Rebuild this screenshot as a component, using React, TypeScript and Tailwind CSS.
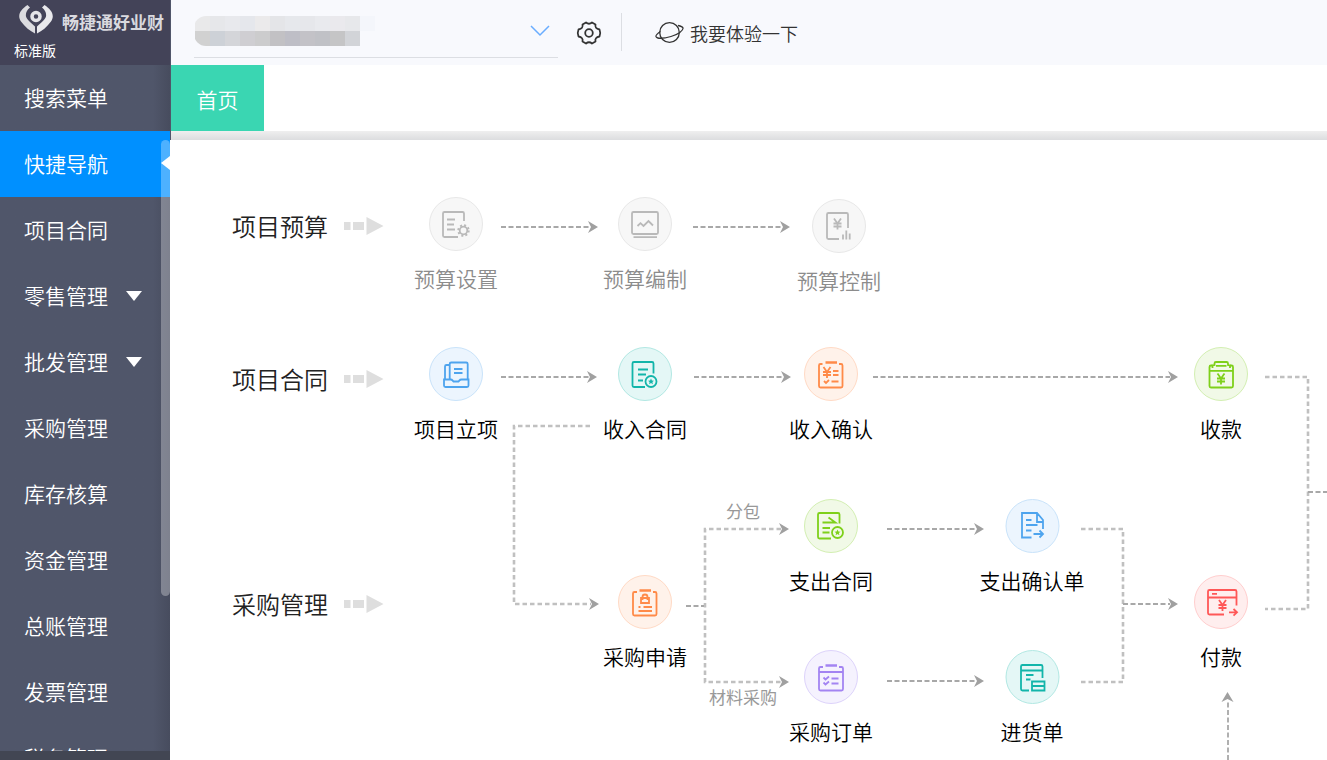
import type { ReactNode } from 'react';

const menu = [
  { label: '搜索菜单' },
  { label: '快捷导航', active: true },
  { label: '项目合同' },
  { label: '零售管理', expandable: true },
  { label: '批发管理', expandable: true },
  { label: '采购管理' },
  { label: '库存核算' },
  { label: '资金管理' },
  { label: '总账管理' },
  { label: '发票管理' },
  { label: '税务管理' },
];

const maskTop = ['#e9e9ea', '#e6e7ea', '#e8e9ed', '#e5e7ec', '#ebeaeb', '#e4e5e8', '#e6e8ec', '#e6e7eb', '#e9eaee', '#eae9ed', '#e7e8eb', '#f4f6fb'];
const maskBottom = ['#d1d1d1', '#cdd1d7', '#d4d5d9', '#cfced2', '#cccccd', '#c2c1c4', '#bebec6', '#c3c2c7', '#c0c1c6', '#c5c5c6', '#d2d4d8'];

const tones = {
  gray: 'bg-[#f7f7f7] border-[#e8e8e8] text-[#b9b9b9]',
  blue: 'bg-[#ecf5fe] border-[#c9e3fa] text-[#4ea4ee]',
  teal: 'bg-[#e4f7f6] border-[#b2e8e3] text-[#12b5aa]',
  orange: 'bg-[#fff2ea] border-[#ffdac5] text-[#ff8a48]',
  green: 'bg-[#f1f9e7] border-[#d3efb2] text-[#7ed01a]',
  red: 'bg-[#ffeeee] border-[#ffcece] text-[#ff5757]',
  purple: 'bg-[#f5f2fe] border-[#ddd3fb] text-[#a384f2]',
};

function Yen({ x, y }: { x: number; y: number }) {
  return (
    <path d={`M${x - 3.5} ${y - 5}l3.5 5l3.500 -5M${x} ${y}v6M${x - 4} ${y}h8M${x - 4} ${y + 3}h8`} />
  );
}

function Star({ x, y }: { x: number; y: number }) {
  return (
    <>
      <circle cx={x} cy={y} r="5.5" />
      <path
        d={`M${x} ${y - 3}l.9 2l2.1 .2l-1.6 1.4l.5 2.1l-1.9 -1.1l-1.9 1.1l.5 -2.1l-1.6 -1.4l2.1 -.2z`}
        fill="currentColor"
        stroke="none"
      />
    </>
  );
}

const icons: Record<string, ReactNode> = {
  budgetSetup: (
    <>
      <path d="M35 24v-7.5q0-1.5-1.5-1.5h-18q-1.5 0-1.5 1.5v22q0 1.5 1.5 1.5H29M18 22.5h8M18 27.5h7M18 32.5h8" />
      <circle cx="34.5" cy="33.5" r="3.8" />
      <circle cx="34.5" cy="33.5" r="5.2" strokeDasharray="2 2.08" strokeWidth="2" />
    </>
  ),
  budgetPlan: (
    <>
      <rect x="14" y="15" width="26" height="22" rx="1.5" />
      <path d="M15.5 40.2h23.5M19.5 29l3-2.8l3 2.8l5-5l4.5 4.500" />
    </>
  ),
  budgetControl: (
    <>
      <path d="M36 29V15.5q0-1.5-1.5-1.5H16.5q-1.5 0-1.5 1.5v23q0 1.5 1.5 1.5H27M31 35.5v5M34.3 31.5v9M37.7 34.5v6" />
      <Yen x={25.5} y={24.5} />
    </>
  ),
  projectStart: (
    <>
      <path d="M15 32.5h6.5q1.5 0 2 1l1 1h5l1-1q.5-1 2-1h7v6q0 1.5-1.5 1.5h-21.5q-1.5 0-1.5-1.5z" />
      <path d="M20.7 32V17q0-1.5 1.5-1.5h15q1.5 0 1.5 1.5v15M16 32V19.5q0-1.5 1.5-1.5h3M25 22h8.5M25 26h8.5" />
    </>
  ),
  incomeContract: (
    <>
      <path d="M35.5 26.5v-10q0-1.5-1.5-1.5H16q-1.5 0-1.5 1.5v22q0 1.5 1.5 1.5h11M20 22.5h10M20 27.5h8M20 33.5h5" />
      <Star x={33} y={34.5} />
    </>
  ),
  incomeConfirm: (
    <>
      <path d="M18.5 17H16.5q-1.5 0-1.5 1.5v20.500q0 1.5 1.5 1.5h20.5q1.5 0 1.5-1.5v-20.500q0-1.5-1.5-1.500h-2" />
      <path d="M21.5 15.5h11.5" strokeWidth="2.5" />
      <path d="M29 24h5.5M29 28h5.5M20 34l2 2l3-3M27.5 34.5h7" />
      <Yen x={23} y={25} />
    </>
  ),
  receipt: (
    <>
      <path d="M18.5 18.5h-1.5q-1.5 0-1.5 1.5v19q0 1.5 1.5 1.5h20.5q1.5 0 1.5-1.5v-19q0-1.5-1.5-1.5h-1.500M15.5 23.8h23.5" />
      <path d="M18.5 21v-2.5l2-.5v-1.5q0-1.5 1.5-1.5h10.5q1.5 0 1.5 1.5v1.5l2 .5v2.5M22 18.8h10.5" />
      <Yen x={27} y={31.5} />
    </>
  ),
  purchaseApply: (
    <>
      <path d="M19 17H16.5q-1.5 0-1.5 1.5v20.5q0 1.5 1.5 1.5h20.5q1.5 0 1.5-1.5v-20.5q0-1.5-1.5-1.5h-2" />
      <path d="M21.5 15.5h11.5" strokeWidth="2.5" />
      <path d="M23 23h8v5h-8zM24.5 25v-3q0-2.5 2.5-2.5t2.5 2.5v3M20.5 32h2M25.5 32h8.5M20.5 36h13.5" />
    </>
  ),
  expenseContract: (
    <>
      <path d="M35.5 24.5v-9q0-1.5-1.5-1.5H15.5q-1.5 0-1.5 1.5v22.5q0 1.5 1.5 1.5h11.5M18.5 23.5h13l-7-5M18.5 29h7.5M18.5 33.5h7" />
      <Star x={33.5} y={33.5} />
    </>
  ),
  expenseConfirm: (
    <path d="M26 38.5h-9.5V14h15l6 7v9M31.5 14v9h6M20.5 21h5.5M20.5 26h11.5M20.5 31.5h5.5M28 35h9.5M34 31.5l3.5 3.5l-3.5 3.5" />
  ),
  payment: (
    <>
      <path d="M30 39.5H15.5q-1.5 0-1.5-1.5V16.5q0-1.5 1.5-1.5h25.5q1.5 0 1.5 1.5v14M14 22.5h28.5M18 18.8h5M35 37.3h8M39.5 34l3.5 3.3l-3.5 3.3" />
      <Yen x={28.5} y={30} />
    </>
  ),
  purchaseOrder: (
    <>
      <path d="M19 17h-2.5q-1.5 0-1.5 1.5v20.5q0 1.5 1.5 1.5h21q1.5 0 1.5-1.5v-20.5q0-1.5-1.5-1.5h-2.5M15 22h24" />
      <path d="M21.500 15.5h11.5" strokeWidth="2.5" />
      <path d="M19.5 27.5l2 2l3.5-3M19.5 32.5l2 2l3.5-3M27.5 28.500h7M27.5 33.5h7" />
    </>
  ),
  goodsReceipt: (
    <path d="M23.5 40.5h-6.5q-1.5 0-1.5-1.5V16.5q0-1.5 1.5-1.5h18.5q1.5 0 1.5 1.5v11.5M15.5 20.5h21.5M20.5 25h7.5M20.5 29.5h4.5M26.5 31.5h12.5v9h-12.5zM26.5 36h12.5" />
  ),
};

type Node = { label: string; icon: string; tone: keyof typeof tones; x: number; y: number };

// x is the centre of a node, y the top of its circle
const nodes: Node[] = [
  { label: '预算设置', icon: 'budgetSetup', tone: 'gray', x: 286, y: 57 },
  { label: '预算编制', icon: 'budgetPlan', tone: 'gray', x: 475, y: 57 },
  { label: '预算控制', icon: 'budgetControl', tone: 'gray', x: 669, y: 59 },
  { label: '项目立项', icon: 'projectStart', tone: 'blue', x: 286, y: 207 },
  { label: '收入合同', icon: 'incomeContract', tone: 'teal', x: 475, y: 207 },
  { label: '收入确认', icon: 'incomeConfirm', tone: 'orange', x: 661, y: 207 },
  { label: '收款', icon: 'receipt', tone: 'green', x: 1051, y: 207 },
  { label: '采购申请', icon: 'purchaseApply', tone: 'orange', x: 475, y: 435 },
  { label: '支出合同', icon: 'expenseContract', tone: 'green', x: 661, y: 359 },
  { label: '支出确认单', icon: 'expenseConfirm', tone: 'blue', x: 862, y: 359 },
  { label: '付款', icon: 'payment', tone: 'red', x: 1051, y: 435 },
  { label: '采购订单', icon: 'purchaseOrder', tone: 'purple', x: 661, y: 510 },
  { label: '进货单', icon: 'goodsReceipt', tone: 'teal', x: 862, y: 510 },
];

const stages = [
  { label: '项目预算', y: 86 },
  { label: '项目合同', y: 239 },
  { label: '采购管理', y: 464 },
];

const branchNotes = [
  { label: '分包', x: 573, y: 371 },
  { label: '材料采购', x: 573, y: 557 },
];

const thinLines = [
  'M331 87H420',
  'M523 87H612',
  'M331 237H420',
  'M524 237H613',
  'M703 237H1000',
  'M717 389H806',
  'M717 541H806',
  'M516 466H534',
  'M953 464H1000',
  'M1138 352H1157',
  'M1058 620V560',
];

const thickLines = [
  'M420 286H344V464H421',
  'M611 389H535V542H611',
  'M1095 237H1138V469H1095',
  'M911 389H953V542H911',
];

const arrowTips = [
  [428, 87], [620, 87], [427, 237], [621, 237], [1008, 237], [429, 464],
  [619, 389], [619, 542], [814, 389], [814, 541], [1008, 464],
];

function Connectors() {
  return (
    <svg className="pointer-events-none absolute left-0 top-0 h-[620px] w-[1157px]" viewBox="0 0 1157 620" fill="none" aria-hidden="true">
      {thickLines.map((d) => (
        <path key={d} d={d} stroke="#c0c0c0" strokeWidth="2.6" strokeDasharray="4.5 3" />
      ))}
      {thinLines.map((d) => (
        <path key={d} d={d} stroke="#a8a8a8" strokeWidth="1.8" strokeDasharray="5 2.5" />
      ))}
      {arrowTips.map(([x, y]) => (
        <path key={`${x}-${y}`} d={`M${x} ${y}l-10 -6l3 6l-3 6z`} fill="#a0a0a0" />
      ))}
      <path d="M1057.5 552l-6 10l6 -3l6 3z" fill="#a0a0a0" />
    </svg>
  );
}

function Logo() {
  return (
    <svg className="h-8 w-9 shrink-0" viewBox="0 0 36 32" fill="none" aria-hidden="true">
      <path d="M9.500 1L12 3.500C8.500 6.500 7.500 9 8 12.500C9 16 13.500 19 17 22.500V29.500C12 27 7 23 3 17.500C-1 11.500 2 6 9.500 1Z" fill="#dcdce0" />
      <path d="M26.500 1L24 3.500C27.500 6.500 28.500 9 28 12.500C27 16 22.500 19 19 22.500V29.500C24 27 29 23 33 17.500C37 11.500 34 6 26.500 1Z" fill="#e9e9ec" />
      <circle cx="18" cy="12.500" r="4" stroke="#e4e4e8" strokeWidth="3.500" />
    </svg>
  );
}

function Sidebar() {
  return (
    <aside className="relative flex w-[170px] shrink-0 flex-col overflow-hidden bg-[#50566a] text-white">
      <div className="h-[65px] shrink-0 bg-[#434358]">
        <div className="flex h-10 items-center gap-2 pl-[18px]">
          <Logo />
          <span className="mt-1 whitespace-nowrap text-[17px] font-bold leading-6 text-[#d9d9df]">畅捷通好业财</span>
        </div>
        <div className="pl-3.5 text-sm leading-5">标准版</div>
      </div>
      <nav className="flex min-h-0 flex-1 flex-col overflow-hidden">
        {menu.map((item) => (
          <a
            key={item.label}
            href="#"
            className={`flex h-[66px] shrink-0 items-center gap-[18px] pl-6 text-[21px] font-[350] ${
              item.active ? 'bg-[#0090ff]' : 'bg-gradient-to-r from-[#50566a] from-90% to-[#474c5e]'
            }`}
          >
            {item.label}
            {item.expandable && (
              <svg className="h-2.5 w-4" viewBox="0 0 16 10" aria-hidden="true">
                <path d="M0 0h16l-8 10z" fill="#fff" />
              </svg>
            )}
          </a>
        ))}
      </nav>
      <div className="h-[9px] shrink-0 bg-[#424653]" />
      <div className="absolute right-0 top-[140px] h-[456px] w-[9px] rounded-full bg-white/30" />
      <svg className="absolute right-0 top-[156px] h-3.5 w-[9px]" viewBox="0 0 9 14" aria-hidden="true">
        <path d="M9 0v14L0 7z" fill="#fff" />
      </svg>
    </aside>
  );
}

function TopBar() {
  return (
    <header className="flex h-[65px] shrink-0 bg-[#f8f9fd] pl-[23px] text-[#333]">
      <button type="button" aria-label="切换账套" className="flex h-[58px] w-[364px] items-center justify-between border-b border-[#dcdee3] pr-2 pt-1">
        <span className="flex flex-col overflow-hidden rounded-l-xl pl-px">
          <span className="flex">
            {maskTop.map((color, i) => (
              <span key={i} className="h-[15px] w-[15px]" style={{ background: color }} />
            ))}
          </span>
          <span className="flex">
            {maskBottom.map((color, i) => (
              <span key={i} className="h-[15px] w-[15px]" style={{ background: color }} />
            ))}
          </span>
        </span>
        <svg className="h-3 w-5" viewBox="0 0 20 12" fill="none" stroke="#69adff" strokeWidth="1.5" aria-hidden="true">
          <path d="M1 1l9 9l9-9" />
        </svg>
      </button>
      <button type="button" aria-label="设置" className="ml-[15px] flex h-[65px] w-8 items-center justify-center">
        <svg className="h-[26px] w-[26px]" viewBox="0 0 26 26" fill="none" stroke="currentColor" strokeWidth="1.8" strokeLinejoin="round" aria-hidden="true">
          <path d="M10 2.5q3 2.500 6 0l3.500 2q-1 4 4 5q1.500 3.500 0 7q-5 1-4 5l-3.500 2q-3-2.500-6 0l-3.500-2q1-4-4-5q-1.500-3.500 0-7q5-1 4-5z" />
          <circle cx="13" cy="13" r="3.8" />
        </svg>
      </button>
      <div className="ml-4 mt-[13px] h-[38px] w-px bg-[#dcdee3]" />
      <a href="#" className="ml-[33px] flex h-[65px] items-center gap-1.5 text-lg font-[350]">
        <svg className="h-6 w-[29px]" viewBox="0 0 29 24" fill="none" stroke="currentColor" strokeWidth="1.3" aria-hidden="true">
          <circle cx="14.5" cy="11.5" r="9.8" />
          <path d="M5.500 10.500C2.500 12.500 .5 14 1 15.500C2 18 9 17.500 16 15.500C23 13.500 28.500 9.500 28 7C27.500 5.500 25.500 5 23 4.500" />
        </svg>
        <span className="leading-6">我要体验一下</span>
      </a>
    </header>
  );
}

export default function App() {
  return (
    <div className="flex h-screen overflow-hidden bg-white font-['Noto_Sans_CJK_SC',sans-serif]">
      <Sidebar />
      <div className="flex min-w-0 flex-1 flex-col">
        <div className="flex shrink-0 flex-col border-l border-[#50566a]">
          <TopBar />
          <div className="flex h-[66px] bg-white">
            <button type="button" className="w-[93px] bg-[#3ad6b2] pt-1 text-[21px] font-[350] text-white">
              首页
            </button>
          </div>
          <div className="h-[9px] bg-gradient-to-b from-[#efefef] to-[#dcdddf]" />
        </div>
        <main className="relative min-h-0 flex-1 overflow-hidden bg-white">
          <Connectors />
          {stages.map((stage) => (
            <h2
              key={stage.label}
              className="absolute left-[62px] flex -translate-y-1/2 items-center gap-4 whitespace-nowrap text-2xl font-[350] text-[#222]"
              style={{ top: stage.y }}
            >
              {stage.label}
              <svg className="h-[18px] w-10" viewBox="0 0 40 18" fill="#dedede" aria-hidden="true">
                <path d="M0 5h6.5v8h-6.5zM9 5h11v8h-11zM22.5 0v18l17-9z" />
              </svg>
            </h2>
          ))}
          {branchNotes.map((note) => (
            <span
              key={note.label}
              className="absolute -translate-x-1/2 -translate-y-1/2 whitespace-nowrap text-[17px] leading-6 text-[#999]"
              style={{ left: note.x, top: note.y }}
            >
              {note.label}
            </span>
          ))}
          {nodes.map((node) => (
            <button
              key={node.label}
              type="button"
              className="absolute flex -translate-x-1/2 flex-col items-center"
              style={{ left: node.x, top: node.y }}
            >
              <span className={`h-[54px] w-[54px] rounded-full border ${tones[node.tone]}`}>
                <svg className="-m-px h-[54px] w-[54px]" viewBox="0 0 54 54" fill="none" stroke="currentColor" strokeWidth="1.8" aria-hidden="true">
                  {icons[node.icon]}
                </svg>
              </span>
              <span className={`mt-3 whitespace-nowrap text-[21px] font-[350] leading-[30px] ${node.tone === 'gray' ? 'text-[#8c8c8c]' : 'text-black'}`}>
                {node.label}
              </span>
            </button>
          ))}
        </main>
      </div>
    </div>
  );
}
